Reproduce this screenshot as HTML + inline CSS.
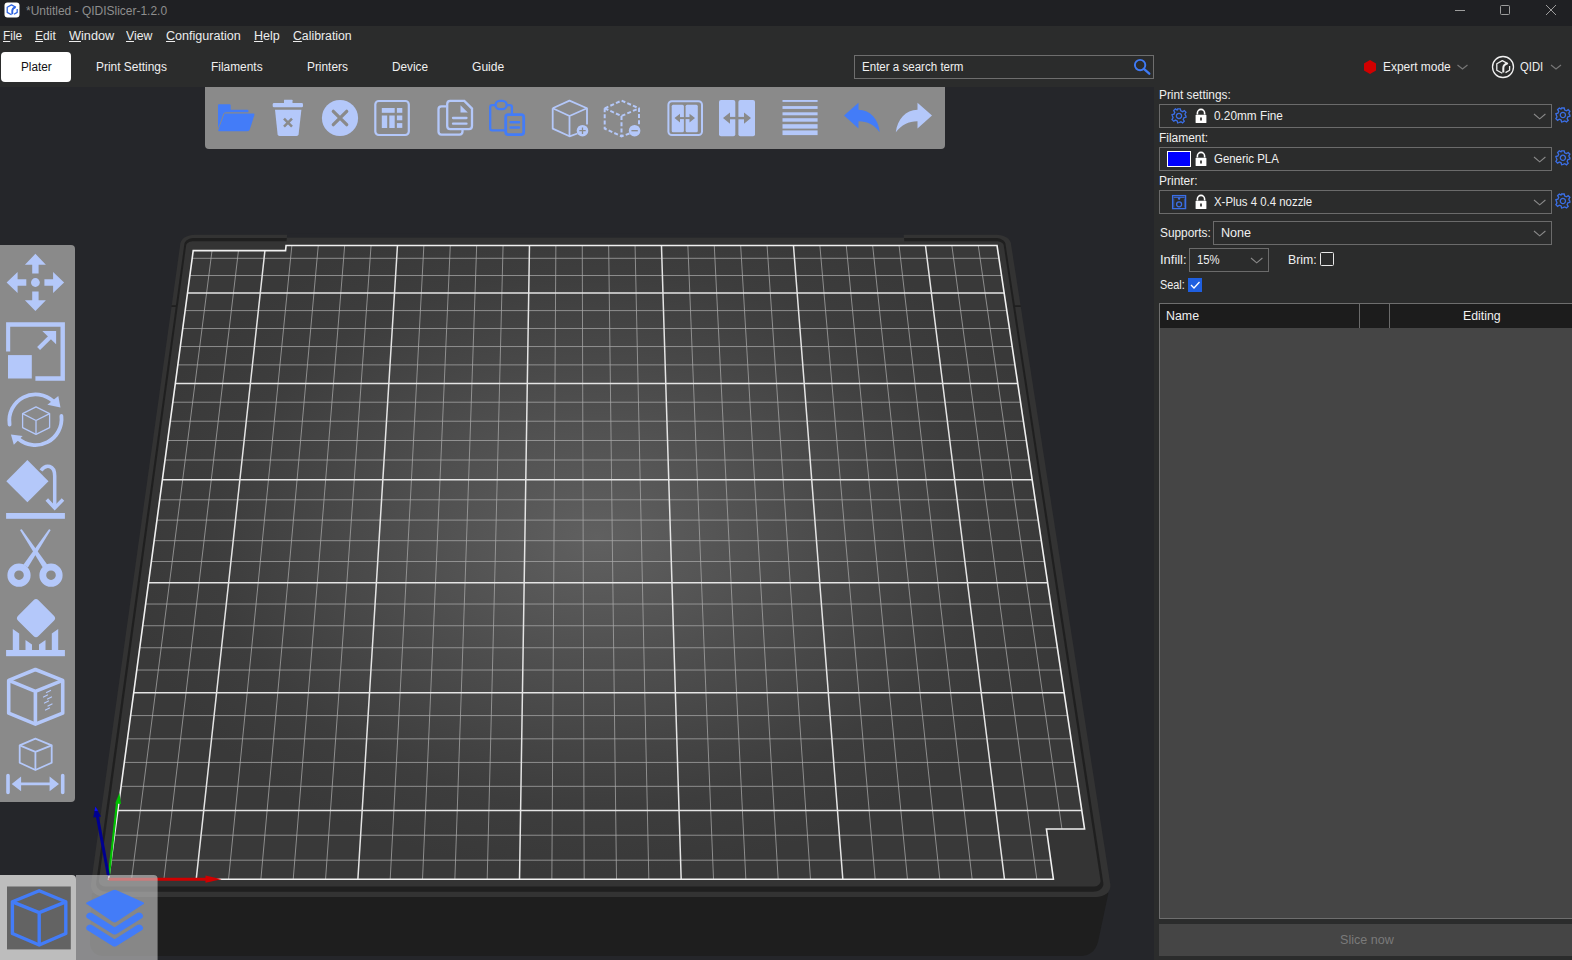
<!DOCTYPE html>
<html><head><meta charset="utf-8">
<style>
*{margin:0;padding:0;box-sizing:border-box}
html,body{width:1572px;height:960px;overflow:hidden;background:#2b2c2c;font-family:"Liberation Sans",sans-serif;}
.a{position:absolute}
.t{position:absolute;font-size:12px;line-height:12px;white-space:nowrap;color:#f2f2f2}
.menu u{text-decoration:underline;text-underline-offset:1px}
.box{position:absolute;border:1px solid #6b6b6b}
svg{position:absolute;overflow:visible}
</style></head><body>
<!-- title bar -->
<div class="a" style="left:0;top:0;width:1572px;height:26px;background:#1f2023"></div>
<svg style="left:0;top:0" width="1572" height="25">
 <rect x="4.5" y="2.5" width="15" height="15" rx="3" fill="#ffffff"/>
 <g fill="none" stroke="#2d62e0" stroke-linejoin="round" transform="translate(12.2 9.9) scale(0.78)"><path stroke-width="1.6" d="M4.8,-3.3 L-0.9,-6.4 L-6.4,-3.3 V3.2 L-0.9,6.3"/><path stroke-width="2.4" d="M4.3,-3.7 C0.8,-2.5 0.1,-1 0.1,1 V5.5"/><path stroke-width="1.6" d="M6.4,-1 V3.2 L2.3,5.6"/></g>
 <g stroke="#9d9d9d" stroke-width="1" fill="none">
  <path d="M1455,10.5 H1465"/>
  <rect x="1500.5" y="5.5" width="9" height="9" rx="1"/>
  <path d="M1546,5 L1556,15 M1556,5 L1546,15"/>
 </g>
</svg>
<!-- plater tab -->
<div class="a" style="left:1px;top:52px;width:70px;height:30px;background:#ffffff;border-radius:4px"></div>
<!-- search box -->
<div class="box" style="left:854px;top:55px;width:300px;height:24px;border-color:#6e6e6e"></div>
<svg style="left:0;top:0" width="1572" height="90">
 <g fill="none" stroke="#3f7af5" stroke-width="1.9"><circle cx="1140.1" cy="65.1" r="5.2"/><path d="M1143.9,68.9 L1149.3,73.7" stroke-width="2.3" stroke-linecap="round"/></g>
 <path d="M1370,60 L1376,63.5 L1376,70.5 L1370,74 L1364,70.5 L1364,63.5 Z" fill="#d10000"/>
 <path d="M1457.5,65 L1462.5,69 L1467.5,65" fill="none" stroke="#777" stroke-width="1.2"/>
 <circle cx="1503" cy="67" r="10.5" fill="none" stroke="#f0f0f0" stroke-width="1.3"/>
 <g fill="none" stroke="#f0f0f0" stroke-linejoin="round" transform="translate(1503.2 67)"><path stroke-width="1.3" d="M4.8,-3.3 L-0.9,-6.4 L-6.4,-3.3 V3.2 L-0.9,6.3"/><path stroke-width="2" d="M4.3,-3.7 C0.8,-2.5 0.1,-1 0.1,1 V5.5"/><path stroke-width="1.3" d="M6.4,-1 V3.2 L2.3,5.6"/></g>
 <path d="M1551,65 L1556,69 L1561,65" fill="none" stroke="#777" stroke-width="1.2"/>
</svg>
<svg width="1154" height="873" viewBox="0 87 1154 873" style="position:absolute;left:0;top:87px">
<defs><radialGradient id="bg1" gradientUnits="userSpaceOnUse" cx="597" cy="538" r="480" gradientTransform="translate(597 538) scale(1 0.7) translate(-597 -538)"><stop offset="0" stop-color="#606060"/><stop offset="0.4" stop-color="#4e4e4e"/><stop offset="0.8" stop-color="#3d3d3d"/><stop offset="1" stop-color="#393939"/></radialGradient></defs>
<rect x="0" y="87" width="1154" height="873" fill="#25262a"/>
<path d="M92,893 L1108.4,893 L1098,942 Q1094,956 1080,956 L104,956 Q92,956 90,944 Z" fill="#1e1e1e"/>
<polygon points="1096.06,896.95 1098.58,896.80 1100.98,896.33 1103.21,895.55 1105.21,894.50 1106.95,893.19 1108.36,891.66 1109.42,889.95 1110.11,888.10 1110.40,886.15 1110.29,884.15 1010.91,243.31 1010.54,241.99 1009.86,240.70 1008.88,239.47 1007.63,238.34 1006.13,237.34 1004.44,236.48 1002.57,235.79 1000.60,235.28 998.55,234.97 996.48,234.87 194.69,234.87 192.62,234.97 190.58,235.28 188.61,235.79 186.76,236.48 185.07,237.34 183.60,238.34 182.36,239.47 181.40,240.70 180.74,241.99 180.39,243.31 90.97,884.15 90.89,886.15 91.21,888.10 91.93,889.95 93.02,891.66 94.45,893.19 96.20,894.50 98.23,895.55 100.47,896.33 102.88,896.80 105.39,896.95" fill="#333333"/>
<polygon points="1093.33,891.69 1095.09,891.58 1096.77,891.25 1098.33,890.72 1099.73,889.98 1100.94,889.07 1101.93,888.00 1102.68,886.80 1103.16,885.51 1103.36,884.14 1103.29,882.75 1005.46,243.82 1005.20,242.89 1004.73,241.99 1004.04,241.13 1003.17,240.34 1002.12,239.63 1000.93,239.03 999.63,238.55 998.24,238.19 996.81,237.98 995.36,237.90 194.41,237.90 192.96,237.98 191.53,238.19 190.15,238.55 188.85,239.03 187.67,239.63 186.64,240.34 185.78,241.13 185.11,241.99 184.64,242.89 184.40,243.82 96.17,882.75 96.12,884.14 96.35,885.51 96.85,886.80 97.61,888.00 98.62,889.07 99.84,889.98 101.26,890.72 102.82,891.25 104.51,891.58 106.26,891.69" fill="#1f1f1f"/>
<polygon points="1093.37,886.58 1094.62,886.50 1095.82,886.26 1096.94,885.88 1097.94,885.36 1098.80,884.71 1099.51,883.94 1100.04,883.09 1100.38,882.17 1100.53,881.20 1100.48,880.20 1003.74,245.52 1003.56,244.85 1003.22,244.21 1002.73,243.59 1002.11,243.03 1001.36,242.52 1000.51,242.09 999.58,241.74 998.59,241.49 997.56,241.33 996.52,241.28 193.30,241.28 192.26,241.33 191.24,241.49 190.25,241.74 189.32,242.09 188.48,242.52 187.74,243.03 187.12,243.59 186.65,244.21 186.32,244.85 186.14,245.52 98.94,880.20 98.91,881.20 99.07,882.17 99.43,883.09 99.97,883.94 100.69,884.71 101.56,885.36 102.57,885.88 103.69,886.26 104.89,886.50 106.15,886.58" fill="#343434"/>
<polygon points="286.87,237.73 903.95,237.73 903.48,233.69 287.28,233.69" fill="#25262a"/>
<polygon points="286.07,245.52 904.87,245.52 903.95,237.73 286.87,237.73" fill="#333333"/>
<path d="M171.49,306.17 L176.06,306.17 M1014.74,306.17 L1020.79,306.17" stroke="#1f1f1f" stroke-width="1.6"/>
<polygon points="108.60,879.18 1053.41,879.18 1046.44,829.04 1084.58,829.04 997.03,245.52 286.07,245.52 285.55,250.62 193.22,250.62" fill="url(#bg1)"/>
<path d="M131.57,879.18 L212.02,250.62 M163.90,879.18 L238.46,250.62 M228.56,879.18 L291.87,245.52 M260.89,879.18 L318.27,245.52 M293.22,879.18 L344.67,245.52 M325.55,879.18 L371.07,245.52 M390.21,879.18 L423.87,245.52 M422.53,879.18 L450.27,245.52 M454.86,879.18 L476.67,245.52 M487.19,879.18 L503.07,245.52 M551.85,879.18 L555.87,245.52 M584.18,879.18 L582.27,245.52 M616.51,879.18 L608.67,245.52 M648.84,879.18 L635.07,245.52 M713.50,879.18 L687.87,245.52 M745.83,879.18 L714.27,245.52 M778.16,879.18 L740.67,245.52 M810.49,879.18 L767.07,245.52 M875.15,879.18 L819.87,245.52 M907.48,879.18 L846.27,245.52 M939.81,879.18 L872.67,245.52 M972.14,879.18 L899.07,245.52 M1036.80,879.18 L951.87,245.52 M1061.94,829.04 L978.27,245.52 M111.15,860.20 L1050.77,860.20 M114.51,835.22 L1047.30,835.22 M121.10,786.34 L1078.17,786.34 M124.32,762.41 L1074.58,762.41 M127.49,738.83 L1071.04,738.83 M130.62,715.58 L1067.56,715.58 M136.75,670.04 L1060.72,670.04 M139.76,647.74 L1057.38,647.74 M142.72,625.74 L1054.08,625.74 M145.64,604.04 L1050.82,604.04 M151.37,561.52 L1044.44,561.52 M154.17,540.68 L1041.31,540.68 M156.94,520.11 L1038.23,520.11 M159.67,499.82 L1035.18,499.82 M165.03,460.02 L1029.21,460.02 M167.66,440.50 L1026.28,440.50 M170.25,421.23 L1023.39,421.23 M172.81,402.21 L1020.54,402.21 M177.84,364.88 L1014.94,364.88 M180.31,346.56 L1012.19,346.56 M182.74,328.47 L1009.47,328.47 M185.15,310.60 L1006.79,310.60 M189.87,275.52 L1001.53,275.52 M192.19,258.30 L998.95,258.30" stroke="#a8a8a8" stroke-width="1" fill="none" stroke-opacity="0.75"/>
<path d="M196.23,879.18 L264.91,250.62 M357.88,879.18 L397.47,245.52 M519.52,879.18 L529.47,245.52 M681.17,879.18 L661.47,245.52 M842.82,879.18 L793.47,245.52 M1004.47,879.18 L925.47,245.52 M117.83,810.60 L1081.81,810.60 M133.71,692.65 L1064.11,692.65 M148.52,582.64 L1047.61,582.64 M162.37,479.79 L1032.18,479.79 M175.34,383.43 L1017.72,383.43 M187.52,292.96 L1004.15,292.96" stroke="#e4e4e4" stroke-width="1.5" fill="none"/>
<polygon points="108.60,879.18 1053.41,879.18 1046.44,829.04 1084.58,829.04 997.03,245.52 286.07,245.52 285.55,250.62 193.22,250.62" stroke="#f0f0f0" stroke-width="1.6" fill="none"/>
<path d="M108.5,879.2 L207,879.2" stroke="#d00000" stroke-width="3"/><path d="M205.5,875.6 L221.5,879.2 L205.5,882.8 Z" fill="#d00000"/>
<path d="M109,875 L117,803" stroke="#00c000" stroke-width="2.2"/><path d="M115.2,803.5 L119.4,792.8 L121,804 Z" fill="#00c000"/>
<path d="M108.5,876 L97.3,816" stroke="#000090" stroke-width="3"/><path d="M93.3,817.5 L95.4,806.4 L101.1,816.5 Z" fill="#000090"/><path d="M94.5,811 L95.4,806.4 L98,810.8 Z" fill="#1010f0"/>
</svg>
<svg style="left:0;top:0" width="1154" height="960" viewBox="0 0 1154 960">
<!-- top toolbar bg -->
<path d="M205,87 H945 V145 Q945,149 941,149 H209 Q205,149 205,145 Z" fill="#8a8a8a"/>
<g fill="#b4c8fa" stroke="none">
 <!-- open folder (blue) -->
 <g fill="#437cf8">
  <path d="M218,105 Q218,104.2 219,104.2 H229.5 Q230.7,104.2 230.7,105.5 V109.7 H247.5 Q248.4,109.7 248.4,110.6 V112.3 H226 Q223.8,112.3 223.3,114 L218,128.5 Z"/>
  <path d="M224.5,113.6 H253.4 Q254.8,113.6 254.4,115 L249.8,129.5 Q249.2,131.3 247.4,131.3 H219.3 Q217.9,131.3 218.3,130 Z"/>
 </g>
 <!-- trash -->
 <path d="M284.2,99.8 H292 Q292.5,99.8 292.5,100.3 V103 H284 V100.3 Q284,99.8 284.2,99.8 Z"/>
 <rect x="272.7" y="103.1" width="30.3" height="4.2" rx="1.3"/>
 <path d="M275,109.8 H301.4 L298.6,134.3 Q298.4,136 296.6,136 H279.6 Q277.8,136 277.6,134.3 Z"/>
 <path d="M284,118.7 L292,126.7 M292,118.7 L284,126.7" stroke="#8a8a8a" stroke-width="2.5" fill="none"/>
 <!-- circle x -->
 <circle cx="340" cy="118" r="18.1"/>
 <path d="M333.3,111.3 L346.7,124.7 M346.7,111.3 L333.3,124.7" stroke="#8a8a8a" stroke-width="3.3" stroke-linecap="round" fill="none"/>
 <!-- arrange -->
 <rect x="375.3" y="101" width="33.5" height="34" rx="3.5" fill="none" stroke="#b4c8fa" stroke-width="2.2"/>
 <rect x="381.8" y="108" width="12.9" height="4.8"/>
 <rect x="381.8" y="115.5" width="5.4" height="12.5"/>
 <rect x="389.3" y="115.5" width="5.4" height="12.5"/>
 <rect x="396.9" y="108" width="5.4" height="4.8"/>
 <rect x="396.9" y="115.5" width="5.4" height="4.8"/>
 <rect x="396.9" y="123.1" width="5.4" height="4.8"/>
 <!-- copy -->
 <path d="M446,106.3 H441.5 Q438.5,106.3 438.5,109.3 V131.6 Q438.5,134.6 441.5,134.6 H459.5 Q462.5,134.6 462.5,131.6 V130.1" fill="none" stroke="#b4c8fa" stroke-width="2.3"/>
 <path d="M450.3,100.9 H464.3 L472,108.6 V126 Q472,129.1 468.9,129.1 H450.3 Q447.2,129.1 447.2,126 V104 Q447.2,100.9 450.3,100.9 Z" fill="none" stroke="#b4c8fa" stroke-width="2.3"/>
 <path d="M460.5,105.3 L467.8,112.6 H460.5 Z"/>
 <path d="M453,118 H466.5 M453,123.7 H466.5" stroke="#b4c8fa" stroke-width="2.3" stroke-linecap="round" fill="none"/>
 <!-- paste (blue) -->
 <g fill="none" stroke="#437cf8" stroke-width="2.3" stroke-linecap="round">
  <path d="M495.5,105.1 H492.3 Q490.2,105.1 490.2,107.2 V128.3 Q490.2,130.4 492.3,130.4 H504.3"/>
  <path d="M507,105.1 H509.8 Q511.9,105.1 511.9,107.2 V113.3"/>
  <rect x="495.5" y="100.9" width="11.2" height="8.2" rx="4.1"/>
  <rect x="505.7" y="114.7" width="18" height="19.9" rx="2.5" stroke-width="2.8"/>
  <path d="M510.6,122.3 H519 M510.6,127.4 H519" stroke-width="2.5"/>
 </g>
 <!-- add instance -->
 <g fill="none" stroke="#b4c8fa" stroke-width="1.8" stroke-linejoin="round">
  <path d="M552.7,108.3 L569.5,100.6 L587,108.3 V124.4 M577.5,133.5 L569.5,136.3 L552.7,128.6 V108.3"/>
  <path d="M552.7,108.3 L569.5,116 L587,108.3 M569.5,116 V136.3"/>
 </g>
 <circle cx="582.5" cy="130.7" r="5.8"/>
 <path d="M579.3,130.7 H585.7 M582.5,127.5 V133.9" stroke="#8a8a8a" stroke-width="1.3"/>
 <!-- remove instance dashed -->
 <g fill="none" stroke="#b4c8fa" stroke-width="2" stroke-dasharray="4 2.2">
  <path d="M604.7,108.3 L621.5,100.6 L639,108.3 V124.4 M629.5,133.5 L621.5,136.3 L604.7,128.6 V108.3"/>
  <path d="M604.7,108.3 L621.5,116 L639,108.3 M621.5,116 V136.3"/>
 </g>
 <circle cx="634.6" cy="130.7" r="5.8"/>
 <path d="M631.4,130.7 H637.8" stroke="#8a8a8a" stroke-width="1.3"/>
 <!-- split objects -->
 <rect x="668.4" y="101.2" width="33.6" height="33.9" rx="3.5" fill="none" stroke="#b4c8fa" stroke-width="2"/>
 <rect x="671.7" y="104.8" width="12.2" height="27.5" rx="1.5"/>
 <rect x="685.6" y="104.8" width="12.2" height="27.5" rx="1.5"/>
 <path d="M679,118.1 H690.5" stroke="#8a8a8a" stroke-width="2" fill="none"/><path d="M674.5,118.1 L680,113.8 V122.4 Z M695,118.1 L689.5,113.8 V122.4 Z" fill="#8a8a8a"/>
 <!-- split parts -->
 <rect x="719" y="99.9" width="16.3" height="36.4" rx="2"/>
 <rect x="738.4" y="99.9" width="16.6" height="36.4" rx="2"/>
 <path d="M729,118.1 H745" stroke="#8a8a8a" stroke-width="2.4" fill="none"/><path d="M723,118.1 L730,112.5 V123.7 Z M751,118.1 L744,112.5 V123.7 Z" fill="#8a8a8a"/>
 <!-- layers -->
 <rect x="782.5" y="100" width="35.1" height="1.9"/>
 <rect x="782.5" y="106.1" width="35.1" height="2.8"/>
 <rect x="782.5" y="112.3" width="35.1" height="3"/>
 <rect x="782.5" y="118.2" width="35.1" height="3.5"/>
 <rect x="782.5" y="124.2" width="35.1" height="4.4"/>
 <rect x="782.5" y="130.4" width="35.1" height="4.7"/>
 <!-- undo blue -->
 <path fill="#437cf8" d="M844,115.6 L858.5,102.8 V109.8 C870.5,110.3 878.5,119 879.7,132.3 C874.5,124.8 867,121.2 858.5,121.3 V128.4 Z"/>
 <!-- redo -->
 <path d="M932,115.6 L917.5,102.8 V109.8 C905.5,110.3 897.5,119 895.8,132.3 C901.5,124.8 909,121.2 917.5,121.3 V128.4 Z"/>
</g>

<!-- left gizmo toolbar -->
<path d="M0,245 H71 Q75,245 75,249 V798 Q75,802 71,802 H0 Z" fill="#8a8a8a"/>
<g fill="#b4c8fa">
 <!-- move -->
 <path d="M35.4,253.8 L45.9,264.8 H38.6 V273.5 H32.2 V264.8 H24.9 Z"/>
 <path d="M35.4,311.1 L45.9,300.2 H38.6 V291.5 H32.2 V300.2 H24.9 Z"/>
 <path d="M6.6,282.5 L17.6,272 V279.3 H26.3 V285.7 H17.6 V293 Z"/>
 <path d="M64.1,282.5 L53.1,272 V279.3 H44.4 V285.7 H53.1 V293 Z"/>
 <circle cx="35.4" cy="282.5" r="4.4"/>
 <!-- scale -->
 <path d="M6.1,351.5 V322.3 H64.9 V380.7 H35.4 V376.3 H60.5 V326.7 H10.2 V351.5 Z"/>
 <rect x="8" y="355.1" width="23.8" height="23.4"/>
 <path d="M38.6,348.6 L51.5,335.7" stroke="#b4c8fa" stroke-width="4.2" fill="none"/>
 <path d="M42.3,331.1 H56.1 V344.2 Z"/>
 <!-- rotate -->
 <g fill="none" stroke="#b4c8fa" stroke-width="3.8" stroke-linecap="round">
  <path d="M9.6,424.5 A26.2,26.2 0 0 1 53.5,401.5"/>
  <path d="M61.4,416 A26.2,26.2 0 0 1 18,438.5"/>
 </g>
 <path d="M47.4,404.7 L58.3,395.9 L60.5,407.6 Z"/>
 <path d="M10.9,434.6 L22.6,436 L13.8,444.8 Z"/>
 <g fill="none" stroke="#b4c8fa" stroke-width="1.3" stroke-linejoin="round">
  <path d="M36,406.9 L49.6,413.7 V427.6 L36,434.3 L22.6,427.6 V413.7 Z"/>
  <path d="M22.6,413.7 L36,420.5 L49.6,413.7 M36,420.5 V434.3"/>
 </g>
 <!-- place on face -->
 <path d="M27.4,460.1 L48.5,481.2 L27.4,502.3 L6.3,481.2 Z"/>
 <path d="M41,470.5 C46,463.5 54.7,465 54.7,476 V506" fill="none" stroke="#b4c8fa" stroke-width="3.5"/>
 <path d="M46.8,499.5 L54.7,508 L63,499.5" fill="none" stroke="#b4c8fa" stroke-width="3.5"/>
 <rect x="6.1" y="513" width="58.8" height="5.8"/>
 <!-- cut -->
 <path d="M21.93,529.45 L47.17,564.56 L42.83,567.44 L20.27,530.55 Q20.5,528.6 21.93,529.45 Z"/>
 <path d="M48.77,529.45 L23.53,564.56 L27.87,567.44 L50.43,530.55 Q50.2,528.6 48.77,529.45 Z"/>
 <circle cx="19" cy="575.2" r="8.2" fill="none" stroke="#b4c8fa" stroke-width="6.8"/>
 <circle cx="51" cy="575.2" r="8.2" fill="none" stroke="#b4c8fa" stroke-width="6.8"/>
 <!-- support paint -->
 <path d="M33.5,600.3 Q36,597.8 38.5,600.3 L53.9,615.7 Q56.4,618.2 53.9,620.7 L38.5,636.1 Q36,638.6 33.5,636.1 L18.1,620.7 Q15.6,618.2 18.1,615.7 Z"/>
 <rect x="6.1" y="650" width="58.8" height="6.2"/>
 <path d="M12.8,629 L19.2,633.5 V650 H12.8 Z M25.5,640 L32,644.5 V650 H25.5 Z M58.2,629 L51.8,633.5 V650 H58.2 Z M45.5,640 L39,644.5 V650 H45.5 Z"/>
 <!-- seam cube -->
 <g fill="none" stroke="#b4c8fa" stroke-width="3.6" stroke-linejoin="round">
  <path d="M35.4,669.5 L62.7,680.4 V713.2 L35.4,724.1 L8.7,713.2 V680.4 Z"/>
  <path d="M8.7,680.4 L35.4,691.3 L62.7,680.4 M35.4,691.3 V724.1"/>
 </g>
 <path d="M46.5,692.5 L50.5,690.5 M43.5,697 L47.5,695 M47.5,699 L51.5,697 M44.5,703 L48.5,701 M48,706 L52,704 M45.5,710 L49.5,708" stroke="#b4c8fa" stroke-width="1.2" stroke-linecap="round"/>
 <!-- measure -->
 <g fill="none" stroke="#b4c8fa" stroke-width="1.8" stroke-linejoin="round">
  <path d="M35.4,738.7 L51.7,745.3 V762.8 L35.4,770 L19.7,762.8 V745.3 Z"/>
  <path d="M19.7,745.3 L35.4,751.8 L51.7,745.3 M35.4,751.8 V770"/>
 </g>
 <path d="M8,775.5 V792.5 M62.7,775.5 V792.5" stroke="#b4c8fa" stroke-width="3.6" stroke-linecap="round"/>
 <path d="M18,783.9 H53" stroke="#b4c8fa" stroke-width="2.6"/>
 <path d="M11.7,783.9 L21.1,776.6 V791.2 Z M59,783.9 L49.6,776.6 V791.2 Z"/>
</g>

<!-- bottom-left view toolbar -->
<path d="M0,875 H72 Q76,875 76,879 V960 H0 Z" fill="#bdbdbd"/>
<path d="M76,875 H153.6 Q157.6,875 157.6,879 V960 H76 Z" fill="#c8c8c8" fill-opacity="0.62"/>
<rect x="7" y="886.5" width="63.8" height="62.9" fill="#636363"/>
<g fill="none" stroke="#437cf8" stroke-width="3.4" stroke-linejoin="round">
 <path d="M39.2,890.8 L65.8,901.8 V933.5 L39.2,945 L12.4,933.5 V901.8 Z"/>
 <path d="M12.4,901.8 L39.2,912.6 L65.8,901.8 M39.2,912.6 V945"/>
</g>
<g fill="#437cf8">
 <path d="M112.6,890.2 Q114.6,889.2 116.6,890.2 L142.8,901.9 Q145.5,903.2 142.8,904.5 L116.6,921.8 Q114.6,923 112.6,921.8 L87.4,904.5 Q84.7,903.2 87.4,901.9 Z"/>
 <path d="M87,918 Q85,916 87.5,913.5 L89,912.8 Q90.5,912 92,913 L114.6,927.3 L137.2,913 Q138.7,912 140.2,912.8 L141.7,913.5 Q144.2,916 142.2,918 L116.6,934 Q114.6,935.2 112.6,934 Z"/>
 <path d="M87,930 Q85,928 87.5,925.5 L89,924.8 Q90.5,924 92,925 L114.6,939.3 L137.2,925 Q138.7,924 140.2,924.8 L141.7,925.5 Q144.2,928 142.2,930 L116.6,946 Q114.6,947.2 112.6,946 Z"/>
</g>
</svg>

<!-- sidebar -->
<div class="a" style="left:1154px;top:87px;width:418px;height:873px;background:#2b2c2c"></div>
<div class="a" style="left:1150px;top:87px;width:4px;height:873px;background:#25262a"></div>
<div class="box" style="left:1159px;top:104px;width:393px;height:24px"></div>
<div class="box" style="left:1159px;top:147px;width:393px;height:24px"></div>
<div class="box" style="left:1159px;top:190px;width:393px;height:24px"></div>
<div class="box" style="left:1213px;top:221px;width:339px;height:24px"></div>
<div class="box" style="left:1189px;top:248px;width:80px;height:24px"></div>
<div class="a" style="left:1320px;top:252px;width:14px;height:14px;border:1.2px solid #e8e8e8;border-radius:1.5px"></div>
<div class="a" style="left:1188px;top:278px;width:14px;height:14px;background:#1f5fe0"></div>
<div class="a" style="left:1166.5px;top:151px;width:24.5px;height:16px;background:#0000ff;border:1px solid #ffffff"></div>
<!-- object list -->
<div class="a" style="left:1159px;top:303px;width:413px;height:616px;background:#454545;border:1px solid #6e6e6e;border-right:none"></div>
<div class="a" style="left:1160px;top:304px;width:412px;height:24px;background:#1c1c1c"></div>
<div class="a" style="left:1359px;top:304px;width:1px;height:24px;background:#6a6a6a"></div>
<div class="a" style="left:1389px;top:304px;width:1px;height:24px;background:#6a6a6a"></div>
<!-- slice button -->
<div class="a" style="left:1159px;top:924px;width:413px;height:32px;background:#454545"></div>
<svg style="left:0;top:0" width="1572" height="960">
 <g fill="none" stroke="#8a8a8a" stroke-width="1.1">
  <path d="M1534,114 L1539.7,118.8 L1545.4,114"/>
  <path d="M1534,157 L1539.7,161.8 L1545.4,157"/>
  <path d="M1534,200 L1539.7,204.8 L1545.4,200"/>
  <path d="M1534,231 L1539.7,235.8 L1545.4,231"/>
  <path d="M1251,258 L1256.7,262.8 L1262.4,258"/>
 </g>
 <path d="M1191,285 L1194,288 L1199.5,282" fill="none" stroke="#ffffff" stroke-width="1.3"/>
 <defs>
  <g id="gear"><path fill="none" stroke="#3b6fe6" stroke-width="1.3" d="M-1.3,-7 H1.3 L1.8,-5 L3.6,-4.2 L5.3,-5.3 L5.3,-5.3 L7,-3.6 L5.9,-1.9 L6.6,-0.1 L7,0 V1.3 L5,1.8 L4.2,3.6 L5.3,5.3 L3.6,7 L1.9,5.9 L0.1,6.6 L-1.3,7 H-1.3 L-1.8,5 L-3.6,4.2 L-5.3,5.3 L-7,3.6 L-5.9,1.9 L-6.6,0.1 L-7,-1.3 L-5,-1.8 L-4.2,-3.6 L-5.3,-5.3 L-3.6,-7 L-1.9,-5.9 Z"/><circle r="2.6" fill="none" stroke="#3b6fe6" stroke-width="1.3"/></g>
  <g id="lock"><path d="M-3.6,-2.5 V-4 A3.6,3.6 0 0 1 3.6,-4 V-2.5" fill="none" stroke="#ffffff" stroke-width="1.6"/><rect x="-5.4" y="-2.2" width="10.8" height="8.2" rx="0.6" fill="#ffffff"/><path d="M0,0.5 V3.6" stroke="#202020" stroke-width="1.6"/></g>
 </defs>
 <use href="#gear" x="1179" y="115.9"/>
 <use href="#gear" x="1562.9" y="115"/>
 <use href="#gear" x="1562.9" y="157.8"/>
 <use href="#gear" x="1562.9" y="201"/>
 <use href="#lock" x="1201" y="117"/>
 <use href="#lock" x="1201" y="160"/>
 <use href="#lock" x="1201" y="203"/>
 <g fill="none" stroke="#3b6fe6" stroke-width="1.3">
  <rect x="1172.6" y="195.6" width="13" height="13"/>
  <path d="M1173.5,197.3 H1184.7" stroke-width="1"/>
  <path d="M1173.8,198.5 V207.5 M1184.4,198.5 V207.5" stroke-width="0.6"/>
  <circle cx="1179.1" cy="204.3" r="2.5"/>
 </g>
 <path d="M1177.6,197.6 H1180.6 L1179.8,199.8 H1178.4 Z" fill="#3b6fe6"/>
</svg>

<div class="t" style="left:25.8px;top:4.74px;color:#8e8e8e;transform:scaleX(0.9979);transform-origin:0 0">*Untitled - QIDISlicer-1.2.0</div>
<div class="t menu" style="left:2.8px;top:29.54px;color:#ececec;transform:scaleX(0.9944);transform-origin:0 0"><u>F</u>ile</div>
<div class="t menu" style="left:34.8px;top:29.54px;color:#ececec;transform:scaleX(1.0047);transform-origin:0 0"><u>E</u>dit</div>
<div class="t menu" style="left:68.7px;top:29.54px;color:#ececec;transform:scaleX(1.0589);transform-origin:0 0"><u>W</u>indow</div>
<div class="t menu" style="left:126.4px;top:29.54px;color:#ececec;transform:scaleX(1.0228);transform-origin:0 0"><u>V</u>iew</div>
<div class="t menu" style="left:165.9px;top:29.54px;color:#ececec;transform:scaleX(1.0464);transform-origin:0 0"><u>C</u>onfiguration</div>
<div class="t menu" style="left:253.7px;top:29.54px;color:#ececec;transform:scaleX(1.0451);transform-origin:0 0"><u>H</u>elp</div>
<div class="t menu" style="left:292.8px;top:29.54px;color:#ececec;transform:scaleX(1.0231);transform-origin:0 0"><u>C</u>alibration</div>
<div class="t" style="left:21.1px;top:61.04px;color:#111111;transform:scaleX(0.9790);transform-origin:0 0">Plater</div>
<div class="t" style="left:95.9px;top:61.04px;color:#f0f0f0;transform:scaleX(0.9933);transform-origin:0 0">Print Settings</div>
<div class="t" style="left:210.9px;top:61.04px;color:#f0f0f0;transform:scaleX(0.9920);transform-origin:0 0">Filaments</div>
<div class="t" style="left:306.8px;top:61.04px;color:#f0f0f0;transform:scaleX(0.9893);transform-origin:0 0">Printers</div>
<div class="t" style="left:391.9px;top:61.04px;color:#f0f0f0;transform:scaleX(0.9813);transform-origin:0 0">Device</div>
<div class="t" style="left:472.1px;top:61.04px;color:#f0f0f0;transform:scaleX(1.0053);transform-origin:0 0">Guide</div>
<div class="t" style="left:861.9px;top:60.74px;color:#f0f0f0;transform:scaleX(0.9632);transform-origin:0 0">Enter a search term</div>
<div class="t" style="left:1383.2px;top:60.74px;color:#f0f0f0;transform:scaleX(0.9949);transform-origin:0 0">Expert mode</div>
<div class="t" style="left:1519.7px;top:60.74px;color:#f0f0f0;transform:scaleX(0.9403);transform-origin:0 0">QIDI</div>
<div class="t" style="left:1159.2px;top:88.54px;color:#f0f0f0;transform:scaleX(0.9862);transform-origin:0 0">Print settings:</div>
<div class="t" style="left:1213.9px;top:109.94px;color:#f0f0f0;transform:scaleX(0.9838);transform-origin:0 0">0.20mm Fine</div>
<div class="t" style="left:1159.2px;top:131.64px;color:#f0f0f0;transform:scaleX(0.9947);transform-origin:0 0">Filament:</div>
<div class="t" style="left:1213.9px;top:152.64px;color:#f0f0f0;transform:scaleX(0.9523);transform-origin:0 0">Generic PLA</div>
<div class="t" style="left:1158.9px;top:174.84px;color:#f0f0f0;transform:scaleX(0.9977);transform-origin:0 0">Printer:</div>
<div class="t" style="left:1213.9px;top:195.64px;color:#f0f0f0;transform:scaleX(0.9498);transform-origin:0 0">X-Plus 4 0.4 nozzle</div>
<div class="t" style="left:1159.7px;top:226.84px;color:#f0f0f0;transform:scaleX(0.9888);transform-origin:0 0">Supports:</div>
<div class="t" style="left:1221.0px;top:226.84px;color:#f0f0f0;transform:scaleX(1.0492);transform-origin:0 0">None</div>
<div class="t" style="left:1160.0px;top:253.84px;color:#f0f0f0;transform:scaleX(1.0775);transform-origin:0 0">Infill:</div>
<div class="t" style="left:1197.2px;top:253.84px;color:#f0f0f0;transform:scaleX(0.9446);transform-origin:0 0">15%</div>
<div class="t" style="left:1288.0px;top:253.84px;color:#f0f0f0;transform:scaleX(1.0250);transform-origin:0 0">Brim:</div>
<div class="t" style="left:1160.0px;top:278.54px;color:#f0f0f0;transform:scaleX(0.9065);transform-origin:0 0">Seal:</div>
<div class="t" style="left:1166.0px;top:309.64px;color:#f0f0f0;transform:scaleX(1.0339);transform-origin:0 0">Name</div>
<div class="t" style="left:1463.0px;top:309.64px;color:#f0f0f0;transform:scaleX(1.0272);transform-origin:0 0">Editing</div>
<div class="t" style="left:1339.9px;top:933.64px;color:#7a7a7a;transform:scaleX(1.0475);transform-origin:0 0">Slice now</div>
</body></html>
